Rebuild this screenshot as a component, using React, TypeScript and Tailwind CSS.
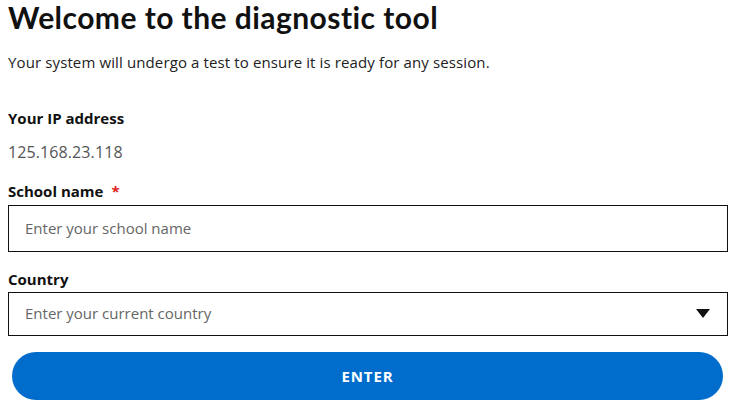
export default function App() {
  return (
    <div className="w-[742px] h-[408px] bg-white overflow-hidden font-['Open_Sans',sans-serif] text-[#1a1a1a]">
      <div className="pl-[8px] pr-[14px]">
        <h1 className="text-[30px] leading-[34px] font-bold font-['Lato',sans-serif] tracking-[0.45px] text-[#111]">Welcome to the diagnostic tool</h1>
        <p className="mt-[18px] text-[15px] leading-[20px] tracking-[0.12px] text-[#222]">Your system will undergo a test to ensure it is ready for any session.</p>
        <div className="mt-[36px] text-[15px] leading-[20px] font-bold text-[#111]">Your IP address</div>
        <div className="mt-[13px] text-[16px] leading-[22px] tracking-[0.1px] text-[#555]">125.168.23.118</div>
        <div className="mt-[18px] text-[15px] leading-[20px] font-bold text-[#111] flex">
          <span>School name</span>
          <span className="ml-[8px] text-[#e02020]">*</span>
        </div>
        <input
          className="mt-[4px] block w-[720px] h-[47px] border border-[#111] px-[16px] pb-[1px] text-[15px] placeholder:text-[#666] outline-none"
          placeholder="Enter your school name"
        />
        <div className="mt-[17px] text-[15px] leading-[20px] font-bold text-[#111]">Country</div>
        <div className="mt-[3px] w-[720px] h-[44px] border border-[#111] px-[16px] pb-[1px] flex items-center justify-between">
          <span className="text-[15px] text-[#666]">Enter your current country</span>
          <svg width="14" height="9" viewBox="0 0 14 9" className="mr-[1px]">
            <polygon points="0,0 14,0 7,9" fill="#111" />
          </svg>
        </div>
      </div>
      <div className="pl-[12px] mt-[16px]">
        <button className="w-[711px] h-[48px] rounded-full bg-[#006ccb] text-white text-[15px] font-bold tracking-[0.9px]">ENTER</button>
      </div>
    </div>
  );
}
